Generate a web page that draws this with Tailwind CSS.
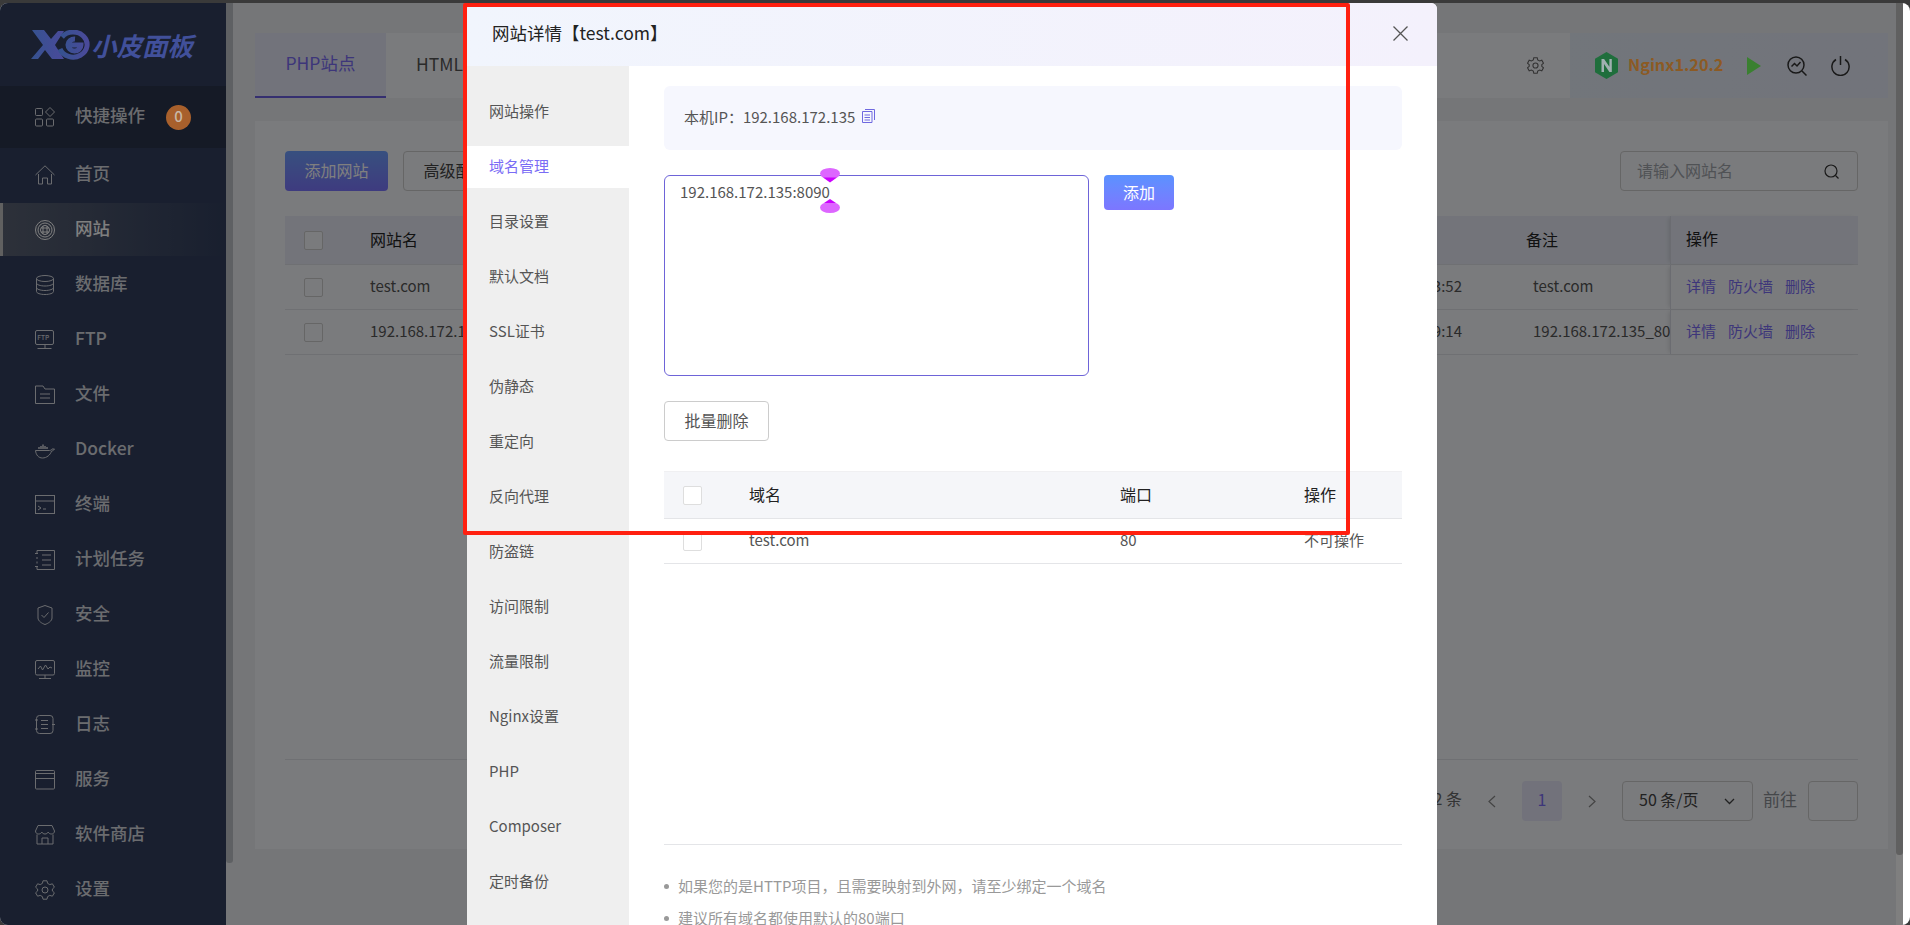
<!DOCTYPE html>
<html lang="zh-CN">
<head>
  <meta charset="UTF-8">
  <meta name="viewport" content="width=device-width, initial-scale=1.0">
  <title>小皮面板</title>
  <script src="https://cdn.jsdelivr.net/npm/@tailwindcss/browser@4"></script>
</head>
<body class="bg-[#3a3a3a] h-screen overflow-hidden pt-[3px] font-['Noto_Sans_CJK_SC','Noto_Sans',sans-serif] text-[15px]">
  <div class="relative h-[922px] overflow-hidden rounded-t-[8px] rounded-bl-[8px] rounded-br-[8px] bg-white">

    <!-- page behind the dialog -->
    <div class="flex h-full w-[1903px]">
      <aside class="w-[226px] shrink-0 bg-[#323f5e] text-[17.5px] font-medium text-[#d6d8de]">
        <div class="relative z-10 flex h-[83px] items-center pl-[31px]">
          <svg class="h-[30px] w-[62px] shrink-0" viewBox="0 0 62 30">
            <defs><linearGradient id="lg" x1="0" x2="1"><stop offset="0" stop-color="#35528f"/><stop offset="1" stop-color="#4a4a9a"/></linearGradient></defs>
            <path fill="url(#lg)" d="M0 29 12 15 1 0h12l7 9 7-8h6L24 15l9 14H21l-7-9-7 9z"/>
            <path fill="none" stroke="url(#lg)" stroke-width="5" d="M31 7a14 12.500 0 1 1-2 12M37 15h13a6.500 6 0 1 1-6-6"/>
          </svg>
          <span class="ml-[-2px] text-[25.500px] font-bold italic leading-none text-[#41509a]">小皮面板</span>
        </div>
        <div class="flex h-[62px] items-center bg-[#2a344c] pl-[35px]">
          <svg class="h-5 w-5 shrink-0" viewBox="0 0 20 20" fill="none" stroke="currentColor"><rect x=".5" y="1.500" width="7" height="7" rx="1"/><rect x=".5" y="12" width="7" height="7" rx="1"/><rect x="11.500" y="12" width="7" height="7" rx="1"/><path d="m15 .5 4.500 4.500-4.500 4.500L10.500 5z"/></svg>
          <span class="ml-[20px] pb-[3px]">快捷操作</span>
          <span class="relative z-10 ml-[21px] flex h-[25px] w-[25px] items-center justify-center rounded-full bg-[#a8602c] pb-[2px] text-[15px] text-[#c8b8a8]">0</span>
        </div>
        <nav>
          <a class="mb-[2px] flex h-[53px] items-center pl-[35px]">
            <svg class="h-5 w-5 shrink-0" viewBox="0 0 20 20" fill="none" stroke="currentColor"><path d="M.5 10 10 .8l9.500 9.200M3.500 9v10h4v-6h5v6h4V9"/></svg>
            <span class="ml-[20px] pb-[3px]">首页</span>
          </a>
          <a class="mb-[2px] flex h-[53px] items-center border-l-[3px] border-[#c0c0c0] bg-gradient-to-r from-[#5a6274] to-[#323f5e] pl-[32px] text-white">
            <svg class="h-5 w-5 shrink-0" viewBox="0 0 20 20" fill="none" stroke="currentColor"><circle cx="10" cy="10" r="9.500"/><circle cx="10" cy="10" r="7"/><circle cx="10" cy="10" r="4.500"/><path d="M6 8h8M6 12h8M8 6v8M12 6v8"/></svg>
            <span class="ml-[20px] pb-[3px]">网站</span>
          </a>
          <a class="mb-[2px] flex h-[53px] items-center pl-[35px]">
            <svg class="h-5 w-5 shrink-0" viewBox="0 0 20 20" fill="none" stroke="currentColor"><ellipse cx="10" cy="3.500" rx="8.500" ry="3"/><path d="M1.500 3.500v13c0 1.700 3.800 3 8.500 3s8.500-1.300 8.500-3v-13M1.500 8c0 1.700 3.800 3 8.500 3s8.500-1.300 8.500-3M1.500 12.500c0 1.700 3.800 3 8.500 3s8.500-1.300 8.500-3"/></svg>
            <span class="ml-[20px] pb-[3px]">数据库</span>
          </a>
          <a class="mb-[2px] flex h-[53px] items-center pl-[35px]">
            <svg class="h-5 w-5 shrink-0" viewBox="0 0 20 20" fill="none" stroke="currentColor"><rect x=".5" y=".5" width="18" height="14" rx="1.500"/><path d="M10 15v3M2.500 18.500h14"/><text x="2.300" y="10" font-size="6.500" fill="currentColor" stroke="none">FTP</text></svg>
            <span class="ml-[20px] pb-[3px]">FTP</span>
          </a>
          <a class="mb-[2px] flex h-[53px] items-center pl-[35px]">
            <svg class="h-5 w-5 shrink-0" viewBox="0 0 20 20" fill="none" stroke="currentColor"><path d="M.5 1h7.500l2 3h9.500v14.500H.5zM5 9h10M5 13h10"/></svg>
            <span class="ml-[20px] pb-[3px]">文件</span>
          </a>
          <a class="mb-[2px] flex h-[53px] items-center pl-[35px]">
            <svg class="h-5 w-5 shrink-0" viewBox="0 0 20 20" fill="none" stroke="currentColor"><path d="M.5 10.500h14c1 0 2-.6 2.500-1.500l2.500 0c-1 1.500-2 2-3 2-1 4-5 7-9 7-4 0-6.500-3-7-7.500z"/><path d="M4 9V7M6 9V6M8 9V4.500M10 9V6M12 9V7" stroke-width="1.500"/></svg>
            <span class="ml-[20px] pb-[3px]">Docker</span>
          </a>
          <a class="mb-[2px] flex h-[53px] items-center pl-[35px]">
            <svg class="h-5 w-5 shrink-0" viewBox="0 0 20 20" fill="none" stroke="currentColor"><rect x=".5" y=".5" width="19" height="18"/><path d="M.5 6h19M3 11l3 2-3 2M8 14h3"/></svg>
            <span class="ml-[20px] pb-[3px]">终端</span>
          </a>
          <a class="mb-[2px] flex h-[53px] items-center pl-[35px]">
            <svg class="h-5 w-5 shrink-0" viewBox="0 0 20 20" fill="none" stroke="currentColor"><path d="M2 3.500V.5h17.500v19H2v-3M2 7v2M2 11.500v2M0 3.500h3M0 16.500h3M7 5h9M7 10h9M7 15h9"/></svg>
            <span class="ml-[20px] pb-[3px]">计划任务</span>
          </a>
          <a class="mb-[2px] flex h-[53px] items-center pl-[35px]">
            <svg class="h-5 w-5 shrink-0" viewBox="0 0 20 20" fill="none" stroke="currentColor"><path d="M10 .5 17 3v10c0 3-4 5.500-7 6.500-3-1-7-3.500-7-6.500V3zM6.500 10l2.500 2.500 4.500-5"/></svg>
            <span class="ml-[20px] pb-[3px]">安全</span>
          </a>
          <a class="mb-[2px] flex h-[53px] items-center pl-[35px]">
            <svg class="h-5 w-5 shrink-0" viewBox="0 0 20 20" fill="none" stroke="currentColor"><rect x=".5" y=".5" width="19" height="14.500" rx="1.500"/><path d="M10 15v3M4 18.500h12M3 9l2.500-3 2 4 3-5 2.500 4 2-2 2 1"/></svg>
            <span class="ml-[20px] pb-[3px]">监控</span>
          </a>
          <a class="mb-[2px] flex h-[53px] items-center pl-[35px]">
            <svg class="h-5 w-5 shrink-0" viewBox="0 0 20 20" fill="none" stroke="currentColor"><rect x="1.500" y=".5" width="16.500" height="18" rx="3"/><path d="M6 5.500h7M6 9.500h7M6 13.500h7M0 5h3M0 14h3M17 9.500h3"/></svg>
            <span class="ml-[20px] pb-[3px]">日志</span>
          </a>
          <a class="mb-[2px] flex h-[53px] items-center pl-[35px]">
            <svg class="h-5 w-5 shrink-0" viewBox="0 0 20 20" fill="none" stroke="currentColor"><rect x=".5" y=".5" width="19" height="18.500" rx="1"/><path d="M.5 3.500h19M.5 8.500h19"/></svg>
            <span class="ml-[20px] pb-[3px]">服务</span>
          </a>
          <a class="mb-[2px] flex h-[53px] items-center pl-[35px]">
            <svg class="h-5 w-5 shrink-0" viewBox="0 0 20 20" fill="none" stroke="currentColor"><path d="M3 .5h14L19.500 6c0 2-1.500 3-3.200 3-1.400 0-2.500-.7-3.100-2-.6 1.300-1.800 2-3.200 2s-2.600-.7-3.200-2c-.6 1.300-1.700 2-3.100 2C2 9 .5 8 .5 6zM2 9.500v9.500h16V9.500M7 19v-6h6v6"/></svg>
            <span class="ml-[20px] pb-[3px]">软件商店</span>
          </a>
          <a class="mb-[2px] flex h-[53px] items-center pl-[35px]">
            <svg class="h-5 w-5 shrink-0" viewBox="0 0 20 20" fill="none" stroke="currentColor"><circle cx="10" cy="10" r="3"/><path d="M8 .8h4l.6 2.600 2.200 1.200 2.600-.8 2 3.400-2 1.800v2l2 1.800-2 3.400-2.600-.8-2.200 1.200-.6 2.600H8l-.6-2.600-2.200-1.200-2.600.8-2-3.400 2-1.800v-2l-2-1.800 2-3.400 2.600.8 2.200-1.200z"/></svg>
            <span class="ml-[20px] pb-[3px]">设置</span>
          </a>
        </nav>
      </aside>

      <div class="relative w-[7px] shrink-0 bg-[#eaecf0]">
        <div class="h-[860px] rounded-b-[3px] bg-[#bcc0c6]"></div>
      </div>

      <main class="flex-1 bg-[#eaecf0] pl-[22px] pr-[8px] pt-[30px]">
        <div class="flex h-[65px] items-stretch bg-[#f4f6fb]">
          <div class="flex w-[131px] items-center justify-center border-b-2 border-[#6a5ee0] bg-[#e4e6f6] pb-[3px] text-[17.500px] text-[#7a6cf5]">PHP站点</div>
          <div class="flex items-center pb-[3px] pl-[30px] text-[17.500px] text-[#555]">HTML站点</div>
          <div class="flex flex-1 items-center justify-end pr-[26px]">
            <svg class="h-[17px] w-[17px] text-[#666]" viewBox="0 0 20 20" fill="none" stroke="currentColor" stroke-width="1.300"><circle cx="10" cy="10" r="3"/><path d="M8 .8h4l.6 2.600 2.200 1.200 2.600-.8 2 3.400-2 1.800v2l2 1.800-2 3.400-2.600-.8-2.200 1.200-.6 2.600H8l-.6-2.600-2.200-1.200-2.600.8-2-3.400 2-1.800v-2l-2-1.800 2-3.400 2.600.8 2.200-1.200z"/></svg>
          </div>
          <div class="flex w-[318px] items-center bg-gradient-to-r from-[#e4ecf6] to-[#e4e8f6] pl-[25px]">
            <svg class="relative z-10 h-[27px] w-[23px] shrink-0" viewBox="0 0 23 27"><path fill="#1f6e3c" d="M11.500 0 23 6.700v13.600L11.500 27 0 20.300V6.700z"/><path fill="#a0b0b0" d="M6.500 20V7h2.600l5.300 7.800V7h2.400v13h-2.400L9 12v8z"/></svg>
            <span class="relative z-10 ml-[10px] pb-[2px] text-[16.300px] font-bold text-[#8c5a24]">Nginx1.20.2</span>
            <svg class="relative z-10 ml-[24px] h-[18px] w-[14px] shrink-0" viewBox="0 0 14 18"><path fill="#3a8030" d="M0 0l14 9-14 9z"/></svg>
            <svg class="ml-[26px] h-5 w-5 shrink-0 text-[#333]" viewBox="0 0 20 20" fill="none" stroke="currentColor" stroke-width="1.500"><circle cx="9" cy="9" r="8"/><path d="m15 15 4.500 4.500M4.500 10.500l3-3 2.500 2.500 3.500-4"/></svg>
            <svg class="ml-[24px] h-[20px] w-[19px] shrink-0 text-[#333]" viewBox="0 0 19 20" fill="none" stroke="currentColor" stroke-width="1.500"><path d="M5 3.500a8.600 8.600 0 1 0 9 0M9.500 0v9"/></svg>
          </div>
        </div>

        <section class="mt-[23px] flex h-[728px] flex-col bg-[#f4f6fa] px-[30px] pt-[30px]">
          <div class="flex h-[40px] items-stretch justify-between">
            <div class="flex gap-[15px]">
              <button class="w-[103px] rounded-[4px] bg-gradient-to-b from-[#6fa0ff] to-[#7c76ff] pb-[3px] text-[16px] text-[#fff]">添加网站</button>
              <button class="w-[105px] rounded-[4px] border border-[#ccc] pb-[3px] text-[16px] text-[#444]">高级配置</button>
            </div>
            <div class="flex w-[238px] items-center justify-between rounded-[4px] border border-[#ccc] pl-[16px] pr-[18px] text-[16px] text-[#a0a4aa]">
              <span class="pb-[3px]">请输入网站名</span>
              <svg class="h-[15px] w-[15px] text-[#333]" viewBox="0 0 15 15" fill="none" stroke="currentColor" stroke-width="1.200"><circle cx="7" cy="7" r="6"/><path d="m11.500 11.500 3 3"/></svg>
            </div>
          </div>

          <div class="mt-[25px] text-[#555]">
            <div class="flex h-[49px] items-center border-b border-[#dfe1e6] bg-[#e6e9f4] text-[16px] text-[#222]">
              <div class="w-[85px] pl-[19px]"><div class="h-[19px] w-[19px] rounded-[2px] border border-[#ccc] bg-[#f4f6fa]"></div></div>
              <div class="flex-1 pb-[3px]">网站名</div>
              <div class="w-[208px] pb-[3px] pl-[64px]">备注</div>
              <div class="w-[188px] self-stretch border-l border-[#d6d9e2] pl-[15px] leading-[44px] shadow-[-3px_0_4px_-2px_rgba(0,0,0,.12)]">操作</div>
            </div>
            <div class="flex h-[45px] items-center border-b border-[#dfe1e6]">
              <div class="w-[85px] pl-[19px]"><div class="h-[19px] w-[19px] rounded-[2px] border border-[#ccc] bg-[#f4f6fa]"></div></div>
              <div class="flex flex-1 justify-between pb-[1px]"><span>test.com</span><span class="text-[#555]">2023-03-07 10:33:52</span></div>
              <div class="w-[208px] overflow-hidden whitespace-nowrap pb-[1px] pl-[71px]">test.com</div>
              <div class="flex w-[188px] gap-[12px] self-stretch items-center border-l border-[#d6d9e2] pb-[2px] pl-[15px] text-[#7a6cf5] shadow-[-3px_0_4px_-2px_rgba(0,0,0,.12)]"><span>详情</span><span>防火墙</span><span>删除</span></div>
            </div>
            <div class="flex h-[45px] items-center border-b border-[#dfe1e6]">
              <div class="w-[85px] pl-[19px]"><div class="h-[19px] w-[19px] rounded-[2px] border border-[#ccc] bg-[#f4f6fa]"></div></div>
              <div class="flex flex-1 justify-between pb-[2px]"><span>192.168.172.135_8090</span><span>2023-03-07 11:09:14</span></div>
              <div class="w-[208px] overflow-hidden whitespace-nowrap pb-[2px] pl-[71px]">192.168.172.135_8090</div>
              <div class="flex w-[188px] gap-[12px] self-stretch items-center border-l border-[#d6d9e2] pb-[2px] pl-[15px] text-[#7a6cf5] shadow-[-3px_0_4px_-2px_rgba(0,0,0,.12)]"><span>详情</span><span>防火墙</span><span>删除</span></div>
            </div>
          </div>

          <div class="mt-[404px] flex h-[62px] items-end justify-end border-t border-[#dfe1e6] text-[#666]">
            <span class="pb-[11px] text-[16px]">共 2 条</span>
            <span class="ml-[26px] mb-[13px] text-[#888]"><svg class="h-[13px] w-[8px]" viewBox="0 0 8 13" fill="none" stroke="currentColor" stroke-width="1.200"><path d="M7 1 1 6.500 7 12"/></svg></span>
            <span class="ml-[26px] flex h-[40px] w-[40px] items-center justify-center rounded-[4px] bg-[#e4e4f6] pb-[4px] text-[16px] text-[#7a6cf5]">1</span>
            <span class="ml-[26px] mb-[13px] text-[#888]"><svg class="h-[13px] w-[8px]" viewBox="0 0 8 13" fill="none" stroke="currentColor" stroke-width="1.200"><path d="m1 1 6 5.500L1 12"/></svg></span>
            <span class="ml-[26px] flex h-[40px] w-[131px] items-center justify-between rounded-[4px] border border-[#ccc] pb-[5px] pl-[16px] pr-[17px] text-[16px] text-[#444]">50 条/页<svg class="mt-[6px] h-[7px] w-[11px]" viewBox="0 0 11 7" fill="none" stroke="currentColor" stroke-width="1.300"><path d="m1 1 4.500 4.500L10 1"/></svg></span>
            <span class="ml-[10px] pb-[10px] text-[17px] text-[#8a8e94]">前往</span>
            <span class="ml-[11px] h-[40px] w-[50px] rounded-[4px] border border-[#ccc]"></span>
          </div>
        </section>
      </main>

      <div class="w-[7px] shrink-0 bg-white">
        <div class="h-[852px] rounded-b-[3px] bg-[#c1c1c1]"></div>
      </div>
    </div>

    <!-- dim layer -->
    <div class="absolute inset-y-0 left-0 w-[1903px] bg-black/50"></div>

    <!-- dialog -->
    <div class="absolute left-[467px] top-0 z-20 h-[1000px] w-[970px] rounded-t-[6px] bg-white text-[#555]">
      <div class="flex h-[63px] items-center justify-between rounded-t-[6px] bg-gradient-to-r from-[#f1f5fd] to-[#f4f1fc] pb-[3px] pl-[25px] pr-[29px]">
        <span class="text-[17.500px] text-[#222]">网站详情【test.com】</span>
        <svg class="h-[15px] w-[15px] text-[#555]" viewBox="0 0 15 15" fill="none" stroke="currentColor" stroke-width="1.300"><path d="m.5.5 14 14M14.500.5l-14 14"/></svg>
      </div>
      <div class="flex h-full">
        <ul class="w-[162px] shrink-0 bg-[#efefef] pt-[25px]">
          <li class="mb-[13px] flex h-[42px] items-center pb-[2px] pl-[22px]">网站操作</li>
          <li class="mb-[13px] flex h-[42px] items-center bg-white pb-[2px] pl-[22px] text-[#7a6cf5]">域名管理</li>
          <li class="mb-[13px] flex h-[42px] items-center pb-[2px] pl-[22px]">目录设置</li>
          <li class="mb-[13px] flex h-[42px] items-center pb-[2px] pl-[22px]">默认文档</li>
          <li class="mb-[13px] flex h-[42px] items-center pb-[2px] pl-[22px]">SSL证书</li>
          <li class="mb-[13px] flex h-[42px] items-center pb-[2px] pl-[22px]">伪静态</li>
          <li class="mb-[13px] flex h-[42px] items-center pb-[2px] pl-[22px]">重定向</li>
          <li class="mb-[13px] flex h-[42px] items-center pb-[2px] pl-[22px]">反向代理</li>
          <li class="mb-[13px] flex h-[42px] items-center pb-[2px] pl-[22px]">防盗链</li>
          <li class="mb-[13px] flex h-[42px] items-center pb-[2px] pl-[22px]">访问限制</li>
          <li class="mb-[13px] flex h-[42px] items-center pb-[2px] pl-[22px]">流量限制</li>
          <li class="mb-[13px] flex h-[42px] items-center pb-[2px] pl-[22px]">Nginx设置</li>
          <li class="mb-[13px] flex h-[42px] items-center pb-[2px] pl-[22px]">PHP</li>
          <li class="mb-[13px] flex h-[42px] items-center pb-[2px] pl-[22px]">Composer</li>
          <li class="mb-[13px] flex h-[42px] items-center pb-[2px] pl-[22px]">定时备份</li>
        </ul>
        <div class="w-[738px] ml-[35px] pt-[20px]">
          <div class="flex h-[64px] items-center rounded-[6px] bg-[#f6f7fe] pb-[2px] pl-[20px]">
            本机IP：192.168.172.135
            <svg class="ml-[7px] mt-[-3px] h-[14px] w-[13px] text-[#6f69e0]" viewBox="0 0 13 14" fill="none" stroke="currentColor"><path d="M.5 2.500h9.500v11H.5zM3 .5h9.500v10.500M2.500 6h5.500M2.500 8.500h5.500M2.500 11h5.500"/></svg>
          </div>
          <div class="mt-[25px] flex items-start gap-[15px]">
            <div class="relative">
              <textarea class="block h-[201px] w-[425px] resize-none rounded-[6px] border border-[#6e64d8] px-[15px] py-[5px] leading-[22px] text-[#555] outline-none">192.168.172.135:8090</textarea>
              <svg class="absolute left-[156px] top-[-7px] h-[45px] w-[20px]" viewBox="0 0 20 45">
                <ellipse cx="10" cy="5.500" rx="10" ry="5.500" fill="#dd66ff"/><path fill="#cc00ff" d="M3 9.500h14l-7 5z"/>
                <ellipse cx="10" cy="39.500" rx="10" ry="5.500" fill="#dd66ff"/><path fill="#cc00ff" d="m10 31 6 4H4z"/>
              </svg>
            </div>
            <button class="h-[35px] w-[70px] rounded-[4px] bg-gradient-to-b from-[#5a92ff] to-[#7c76ff] pb-[2px] text-[16px] text-white">添加</button>
          </div>
          <button class="mt-[25px] block h-[40px] w-[105px] rounded-[4px] border border-[#ccc] pb-[3px] text-[16px] text-[#555]">批量删除</button>
          <div class="mt-[30px] flex h-[48px] items-center border-y border-[#f0f0f2] border-b-[#e4e5e8] bg-[#f5f6f9] text-[16px] text-[#222]">
            <div class="w-[85px] pl-[19px]"><div class="h-[19px] w-[19px] rounded-[2px] border border-[#dedede] bg-white"></div></div>
            <div class="w-[371px] pb-[3px]">域名</div>
            <div class="w-[184px] pb-[3px]">端口</div>
            <div class="pb-[3px]">操作</div>
          </div>
          <div class="flex h-[45px] items-center border-b border-[#e4e5e8]">
            <div class="w-[85px] pl-[19px]"><div class="h-[19px] w-[19px] rounded-[2px] border border-[#dedede] bg-white"></div></div>
            <div class="w-[371px] pb-[1px]">test.com</div>
            <div class="w-[184px] pb-[1px]">80</div>
            <div class="pb-[1px]">不可操作</div>
          </div>
          <div class="mt-[280px] border-t border-[#e4e5e8] pt-[25px] text-[#999]">
            <p class="flex h-[32px] items-center"><span class="mr-[9px] h-[5px] w-[5px] rounded-full bg-[#999]"></span>如果您的是HTTP项目，且需要映射到外网，请至少绑定一个域名</p>
            <p class="flex h-[32px] items-center"><span class="mr-[9px] h-[5px] w-[5px] rounded-full bg-[#999]"></span>建议所有域名都使用默认的80端口</p>
          </div>
        </div>
      </div>
    </div>

    <!-- annotation box -->
    <div class="pointer-events-none absolute left-[463px] top-0 z-30 h-[532px] w-[887px] rounded-[2px] border-4 border-[#ff2010]"></div>
  </div>
</body>
</html>
